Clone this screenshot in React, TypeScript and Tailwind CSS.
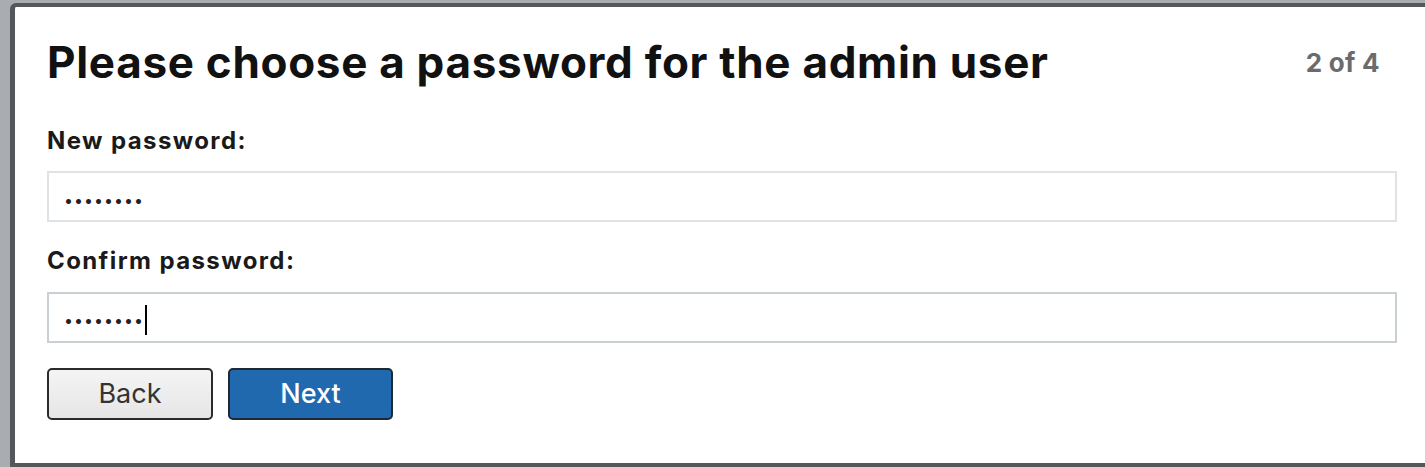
export default function App() {
  return (
    <div className="h-[467px] w-[1425px] overflow-hidden bg-[#a9adb1] pl-[10px] pt-[3px]" style={{ fontFamily: "Inter, 'Noto Sans', sans-serif" }}>
      <div className="h-full rounded-tl-[6px] border-l-[5px] border-t-[4px] border-b-[4px] border-[#55585b] bg-white pl-[32px] pr-[28px]">
        <div className="flex items-center justify-between pt-[27px]">
          <h1 className="text-[44px] font-bold leading-[56px] text-[#111] tracking-[0.7px]">
            Please choose a password for the admin user
          </h1>
          <span className="mr-[17px] text-[26px] font-bold tracking-[0.3px] text-[#6b6b6b]">2 of 4</span>
        </div>

        <label className="mt-[37px] block text-[24px] font-bold leading-[28px] tracking-[1.4px] text-[#1a1a1a]">New password:</label>
        <div className="mt-[16px] flex h-[51px] items-center border-2 border-[#dfe3e6] pl-[15px] pt-[6px]">
          <span className="text-[16px] tracking-[1px] text-[#222]">••••••••</span>
        </div>

        <label className="mt-[25px] block text-[24px] font-bold leading-[28px] tracking-[1.4px] text-[#1a1a1a]">Confirm password:</label>
        <div className="mt-[17px] flex h-[51px] items-center border-2 border-[#c9d0d4] pl-[15px] pt-[4px]">
          <span className="text-[16px] tracking-[1px] text-[#222]">••••••••</span>
          <span className="ml-[1px] h-[30px] w-[2px] bg-black" />
        </div>

        <div className="mt-[25px] flex gap-[15px]">
          <button className="h-[52px] w-[166px] rounded-[5px] border-2 border-[#2b2b2b] bg-gradient-to-b from-[#f4f4f4] to-[#e6e6e6] text-[27px] text-[#333]">
            Back
          </button>
          <button className="h-[52px] w-[165px] rounded-[5px] border-2 border-[#1d2a36] bg-[#2169ae] text-[27px] font-medium text-white">
            Next
          </button>
        </div>
      </div>
    </div>
  );
}
